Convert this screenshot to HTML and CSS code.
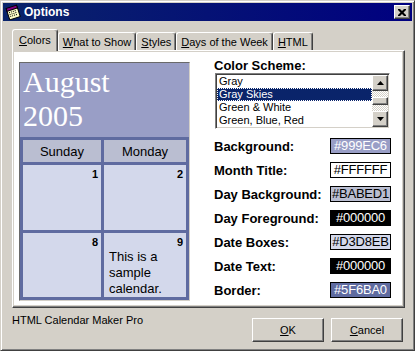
FILE: index.html
```html
<!DOCTYPE html>
<html lang="en">
<head>
    <meta charset="UTF-8">
    <meta name="viewport" content="width=device-width, initial-scale=1.0">
    <title>Options</title>
    <link rel="stylesheet" href="styles.css">
</head>
<body>
    <div class="window">
        <div class="titlebar">
            <svg class="title-icon" width="16" height="16" viewBox="0 0 16 16">
                <g transform="rotate(-18 8 8)">
                    <rect x="2.5" y="4.5" width="11" height="10" fill="#ffffc8" stroke="#000"/>
                    <rect x="2.5" y="2.5" width="11" height="3" fill="#800080" stroke="#000"/>
                    <g fill="#000">
                        <rect x="4" y="7" width="1" height="1"/><rect x="6" y="7" width="1" height="1"/><rect x="8" y="7" width="1" height="1"/><rect x="10" y="7" width="1" height="1"/>
                        <rect x="4" y="9" width="1" height="1"/><rect x="6" y="9" width="1" height="1"/><rect x="8" y="9" width="1" height="1"/><rect x="10" y="9" width="1" height="1"/>
                        <rect x="4" y="11" width="1" height="1"/><rect x="6" y="11" width="1" height="1"/><rect x="8" y="11" width="1" height="1"/><rect x="10" y="11" width="1" height="1"/>
                    </g>
                </g>
            </svg>
            <span class="title">Options</span>
            <div class="close raised">
                <svg width="8" height="7" viewBox="0 0 8 7">
                    <path d="M0 0h2l2 2 2-2h2v1l-2.5 2.5L8 6v1H6L4 5 2 7H0V6l2.5-2.5L0 1z" fill="#000"/>
                </svg>
            </div>
        </div>

        <div class="tabs">
            <div class="tab active"><u>C</u>olors</div>
            <div class="tab"><u>W</u>hat to Show</div>
            <div class="tab"><u>S</u>tyles</div>
            <div class="tab"><u>D</u>ays of the Week</div>
            <div class="tab"><u>H</u>TML</div>
        </div>

        <div class="panel">
            <div class="page">
                <div class="preview">
                    <div class="month">August<br>2005</div>
                    <div class="grid">
                        <div class="dayname">Sunday</div>
                        <div class="dayname">Monday</div>
                        <div class="date"><div class="num">1</div></div>
                        <div class="date"><div class="num">2</div></div>
                        <div class="date"><div class="num">8</div></div>
                        <div class="date">
                            <div class="num">9</div>
                            <div class="note">This is a sample calendar.</div>
                        </div>
                    </div>
                </div>

                <div class="settings">
                    <div class="heading">Color Scheme:</div>
                    <div class="listbox">
                        <ul class="items">
                            <li>Gray</li>
                            <li class="selected">Gray Skies</li>
                            <li>Green &amp; White</li>
                            <li>Green, Blue, Red</li>
                        </ul>
                        <div class="scrollbar">
                            <div class="scroll-btn raised">
                                <svg width="7" height="4" viewBox="0 0 7 4"><path d="M3.5 0L7 4H0z" fill="#000"/></svg>
                            </div>
                            <div class="track short"></div>
                            <div class="thumb raised"></div>
                            <div class="track"></div>
                            <div class="scroll-btn raised">
                                <svg width="7" height="4" viewBox="0 0 7 4"><path d="M0 0h7L3.5 4z" fill="#000"/></svg>
                            </div>
                        </div>
                    </div>

                    <div class="color-row">
                        <span class="label">Background:</span>
                        <span class="swatch dark" style="background:#999EC6">#999EC6</span>
                    </div>
                    <div class="color-row">
                        <span class="label">Month Title:</span>
                        <span class="swatch" style="background:#FFFFFF">#FFFFFF</span>
                    </div>
                    <div class="color-row">
                        <span class="label">Day Background:</span>
                        <span class="swatch" style="background:#BABED1">#BABED1</span>
                    </div>
                    <div class="color-row">
                        <span class="label">Day Foreground:</span>
                        <span class="swatch dark" style="background:#000000">#000000</span>
                    </div>
                    <div class="color-row">
                        <span class="label">Date Boxes:</span>
                        <span class="swatch" style="background:#D3D8EB">#D3D8EB</span>
                    </div>
                    <div class="color-row">
                        <span class="label">Date Text:</span>
                        <span class="swatch dark" style="background:#000000">#000000</span>
                    </div>
                    <div class="color-row">
                        <span class="label">Border:</span>
                        <span class="swatch dark" style="background:#5F6BA0">#5F6BA0</span>
                    </div>
                </div>
            </div>
        </div>

        <div class="footer">
            <span class="app-name">HTML Calendar Maker Pro</span>
            <button class="button raised"><u>O</u>K</button>
            <button class="button raised"><u>C</u>ancel</button>
        </div>
    </div>
</body>
</html>
```

FILE: styles.css
```css
body {
    margin: 0;
    font-family: 'Liberation Sans', Arial, sans-serif;
    font-size: 11px;
    color: #000;
    background: #d4d0c8;
}

.window {
    width: 415px;
    height: 351px;
    box-sizing: border-box;
    display: flex;
    flex-direction: column;
    padding: 2px;
    background: #d4d0c8;
    border: 1px solid;
    border-color: #d4d0c8 #404040 #404040 #d4d0c8;
    box-shadow: inset 1px 1px #fff, inset -1px -1px #808080;
}

.raised {
    box-sizing: border-box;
    background: #d4d0c8;
    border: 1px solid;
    border-color: #fff #404040 #404040 #fff;
    box-shadow: inset -1px -1px #808080;
}

/* title bar */
.titlebar {
    height: 18px;
    display: flex;
    align-items: center;
    padding: 0 2px;
    background: linear-gradient(to right, #0a246a, #000080);
    color: #fff;
}

.title-icon {
    margin-right: 3px;
}

.title {
    flex: 1;
    font-weight: bold;
    font-size: 12px;
}

.close {
    width: 16px;
    height: 14px;
    display: flex;
    justify-content: center;
    align-items: center;
    padding-right: 1px;
}

/* tabs */
.tabs {
    display: flex;
    align-items: flex-end;
    height: 21px;
    margin: 8px 7px 0 9px;
    position: relative;
    z-index: 1;
}

.tab {
    height: 18px;
    box-sizing: border-box;
    padding: 2px 4px 0;
    border: 1px solid;
    border-color: #fff #404040 transparent #fff;
    border-bottom: none;
    border-radius: 3px 3px 0 0;
    box-shadow: inset -1px 0 #808080;
    line-height: 14px;
    white-space: nowrap;
}

.tab.active {
    height: 22px;
    margin-bottom: -1px;
    padding: 3px 6px 0;
    background: #d4d0c8;
}

/* panel */
.panel {
    height: 258px;
    box-sizing: border-box;
    margin: 0 7px 0 9px;
    padding: 1px 2px 2px 1px;
    border: 1px solid;
    border-color: #fff #404040 #404040 #fff;
    box-shadow: inset -1px -1px #808080;
}

.page {
    height: 100%;
    display: flex;
    background: #fff;
}

/* calendar preview */
.preview {
    width: 169px;
    height: 237px;
    margin: 10px 0 0 5px;
    border: 1px solid;
    border-color: #6a6a6a #d4d0c8 #d4d0c8 #6a6a6a;
    overflow: hidden;
}

.month {
    height: 74px;
    box-sizing: border-box;
    padding: 2px 3px;
    background: #999ec6;
    color: #fff;
    font-family: 'Liberation Serif', 'Times New Roman', serif;
    font-size: 30px;
    line-height: 34px;
}

.grid {
    display: grid;
    grid-template-columns: 78px 82px;
    grid-template-rows: 22px 65px 64px;
    gap: 3px;
    padding: 3px;
    background: #5f6ba0;
}

.dayname {
    background: #babed1;
    text-align: center;
    font-size: 13px;
    line-height: 22px;
    padding-top: 1px;
}

.date {
    background: #d3d8eb;
    padding: 3px 3px 0;
}

.num {
    text-align: right;
    font-weight: bold;
    font-size: 11px;
    line-height: 13px;
}

.note {
    padding-left: 2px;
    font-size: 13px;
    line-height: 16px;
}

/* settings */
.settings {
    width: 177px;
    margin-left: 24px;
    padding-top: 7px;
}

.heading {
    font-weight: bold;
    font-size: 13px;
    line-height: 14px;
}

.listbox {
    display: flex;
    width: 175px;
    height: 56px;
    box-sizing: border-box;
    margin: 0 0 5px 1px;
    border: 1px solid;
    border-color: #808080 #fff #fff #808080;
    box-shadow: inset 1px 1px #404040, inset -1px -1px #d4d0c8;
    padding: 1px;
}

.items {
    flex: 1;
    margin: 0;
    padding: 0;
    list-style: none;
    background: #fff;
}

.items li {
    height: 13px;
    line-height: 13px;
    padding-left: 2px;
    white-space: nowrap;
}

.items li.selected {
    background: #0a246a;
    color: #fff;
    outline: 1px dotted #fff;
    outline-offset: -1px;
}

.scrollbar {
    width: 16px;
    display: flex;
    flex-direction: column;
}

.scroll-btn {
    height: 16px;
    display: flex;
    justify-content: center;
    align-items: center;
}

.track {
    flex: 1;
    background: repeating-conic-gradient(#d4d0c8 0 25%, #fff 0 50%) 0 0 / 2px 2px;
}

.track.short {
    flex: 0 0 6px;
}

.thumb {
    height: 8px;
}

.color-row {
    display: flex;
    align-items: center;
    height: 24px;
}

.label {
    flex: 1;
    font-weight: bold;
    font-size: 13px;
}

.swatch {
    width: 61px;
    height: 16px;
    box-sizing: border-box;
    border: 1px solid #000;
    font-size: 13px;
    line-height: 14px;
    text-align: center;
    letter-spacing: -0.2px;
    color: #000;
}

.swatch.dark {
    color: #fff;
}

/* footer */
.footer {
    flex: 1;
    display: flex;
    align-items: flex-start;
    gap: 7px;
    padding: 10px 9px 0 9px;
}

.app-name {
    flex: 1;
    margin-top: -4px;
    line-height: 13px;
}

.button {
    width: 72px;
    height: 24px;
    font-family: 'Liberation Sans', Arial, sans-serif;
    font-size: 11px;
    color: #000;
    padding: 0;
}
```
